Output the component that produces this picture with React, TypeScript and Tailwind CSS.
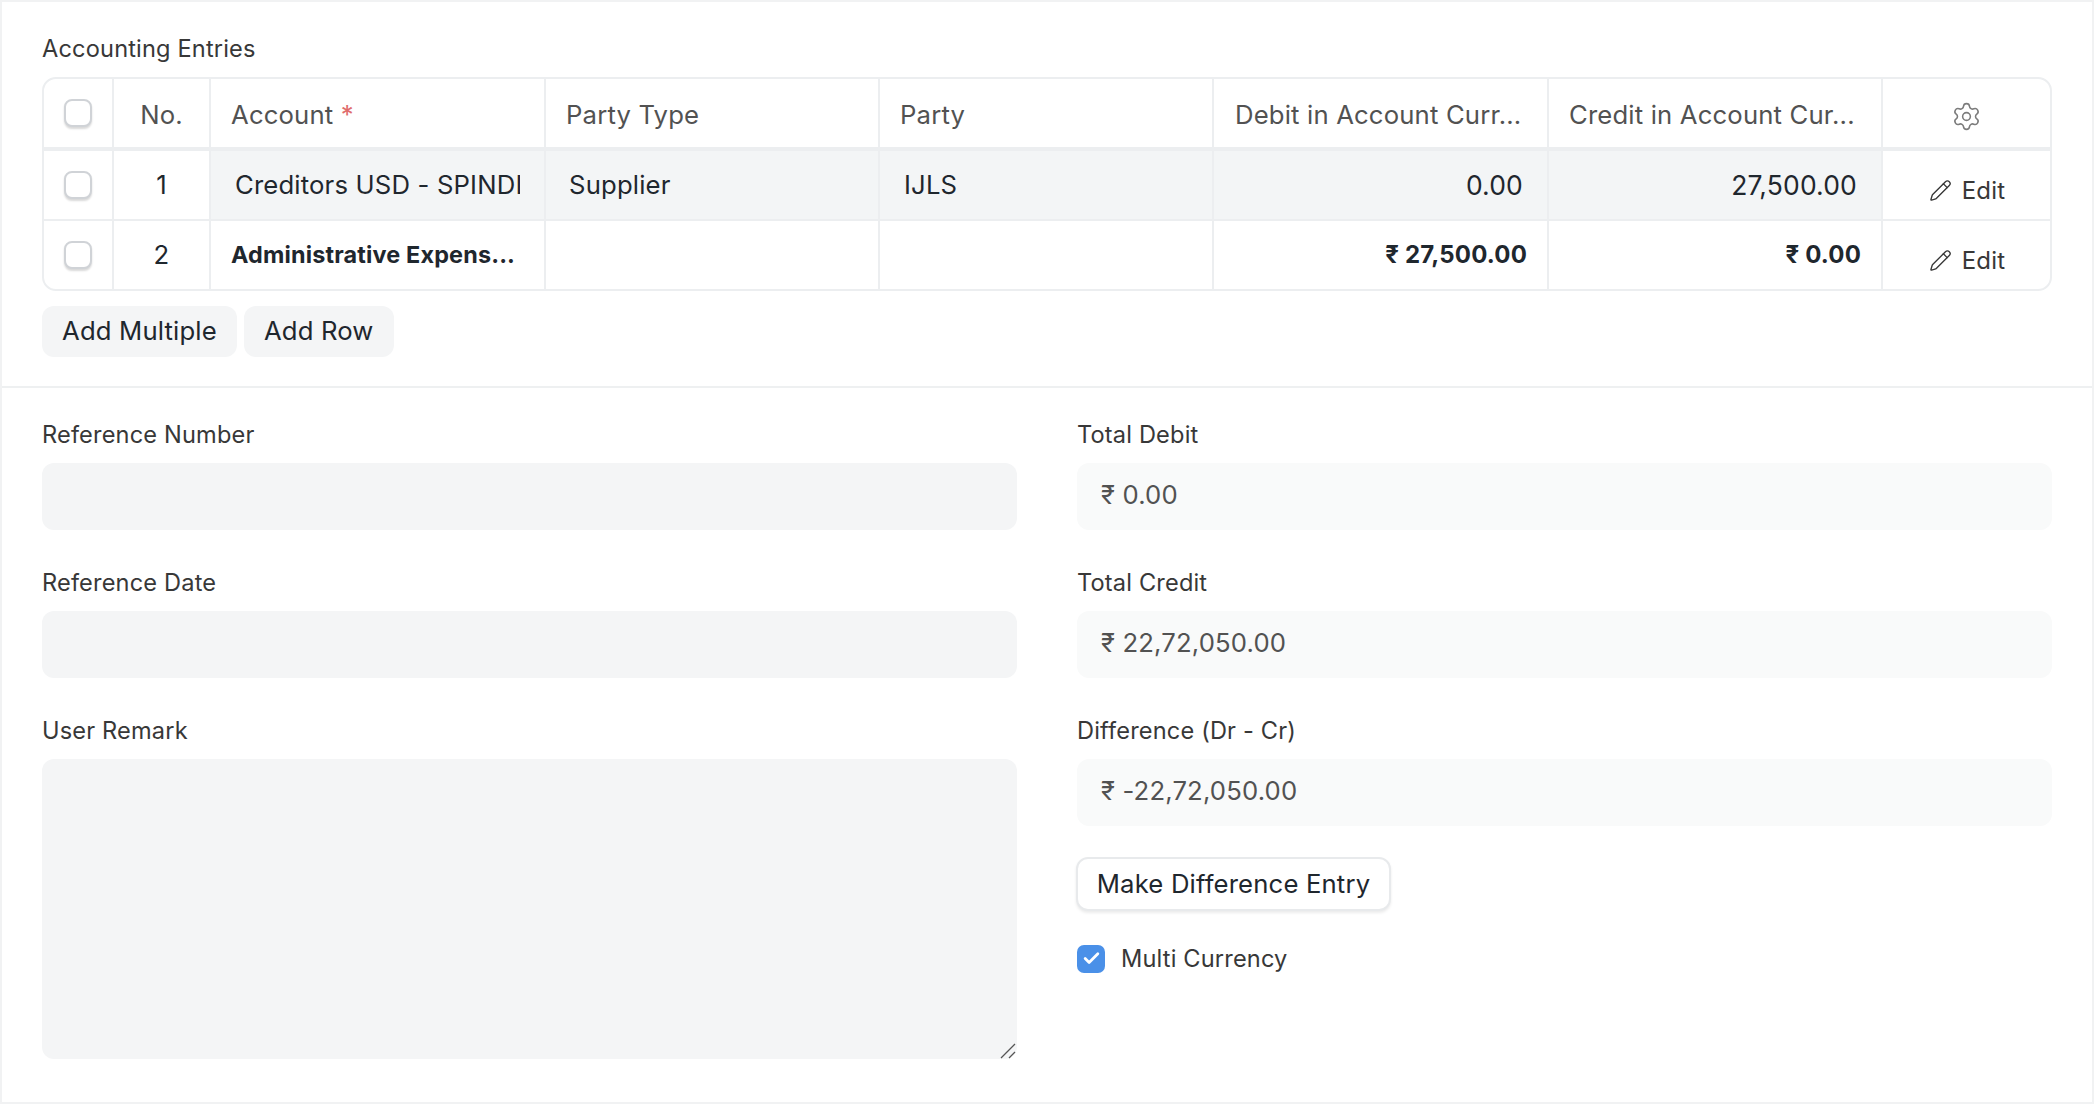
import React from "react";
import { Pencil, Settings, Check } from "lucide-react";

const font = { fontFamily: "Inter, 'Noto Sans', sans-serif" };

const cols = "grid grid-cols-[70px_97px_335px_334px_334px_335px_334px_1fr]";

const RowCheck = () => (
  <div className="w-[28px] h-[28px] rounded-[8px] border-2 border-[#d0d3d7] bg-white shadow-[0_2px_2px_rgba(0,0,0,0.15)]" />
);

const Field = ({ label, value, ro }: { label: string; value?: string; ro?: boolean }) => (
  <div className="mb-[39px]">
    <div className="h-[28px] mb-[14px] text-[23.6px] leading-[28px] text-[#383838]">{label}</div>
    <div className={`h-[67px] rounded-[12px] px-[24px] pb-[2px] flex items-center text-[25.7px] text-[#525252] ${ro ? "bg-[#f9fafa]" : "bg-[#f4f5f6]"}`}>
      {value}
    </div>
  </div>
);

const th = "border-r-2 border-[#eceef0] flex items-center overflow-hidden whitespace-nowrap";

const Row = ({ n, bold }: { n: number; bold?: boolean }) => (
  <div className={`${cols} text-[25.7px] text-[#1f272e] ${bold ? "h-[68px]" : "h-[70px] border-b-2 border-[#eceef0]"}`}>
    <div className={`${th} justify-center`}><RowCheck /></div>
    <div className={`${th} justify-center`}>{n}</div>
    {bold ? (
      <>
        <div className={`${th} px-[20px] font-bold text-[23.4px]`}>Administrative Expens...</div>
        <div className={th} />
        <div className={th} />
        <div className={`${th} justify-end pr-[20px] font-bold text-[24px]`}>₹ 27,500.00</div>
        <div className={`${th} justify-end pr-[20px] font-bold text-[24px]`}>₹ 0.00</div>
      </>
    ) : (
      <>
        <div className={`${th} bg-[#f3f5f6] pl-[24px] pr-[24px] pt-[1px]`}><span className="block w-full overflow-hidden">Creditors USD - SPINDLE</span></div>
        <div className={`${th} bg-[#f3f5f6] px-[23px] pt-[1px]`}>Supplier</div>
        <div className={`${th} bg-[#f3f5f6] px-[24px] pt-[1px]`}>IJLS</div>
        <div className={`${th} bg-[#f3f5f6] justify-end pr-[24px] pt-[1px] text-[26.5px]`}>0.00</div>
        <div className={`${th} bg-[#f3f5f6] justify-end pr-[24px] pt-[1px] text-[26.5px]`}>27,500.00</div>
      </>
    )}
    <div className="flex items-center justify-center gap-[10px] pl-[1px] pt-[11px] text-[24px] text-[#383838]">
      <Pencil size={23} strokeWidth={1.4} />
      Edit
    </div>
  </div>
);

export default function App() {
  return (
    <div style={font} className="w-[2094px] h-[1104px] bg-white border-x-2 border-y-2 border-[#f1f2f3] overflow-hidden tracking-[0.01em]">
      <div className="h-[386px] border-b-2 border-[#eef0f1] px-[40px] pt-[31px]">
        <div className="h-[32px] mb-[12px] text-[23.6px] leading-[32px] text-[#383838]">Accounting Entries</div>
        <div className="rounded-[14px] border-2 border-[#eceef0] overflow-hidden">
          <div className={`${cols} h-[72px] border-b-[4px] border-[#eceef0] text-[25.7px] text-[#525252]`}>
            <div className={`${th} justify-center`}><RowCheck /></div>
            <div className={`${th} justify-center pt-[5px]`}>No.</div>
            <div className={`${th} px-[20px] pt-[5px]`}>Account&nbsp;<span className="text-[#e06c6c]">*</span></div>
            <div className={`${th} px-[20px] pt-[5px]`}>Party Type</div>
            <div className={`${th} px-[20px] pt-[5px]`}>Party</div>
            <div className={`${th} px-[21px] pt-[5px]`}>Debit in Account Curr...</div>
            <div className={`${th} px-[20px] pt-[5px]`}>Credit in Account Cur...</div>
            <div className="flex items-center justify-center pt-[6px]"><Settings size={31} strokeWidth={1.2} className="text-[#7c7c7c]" /></div>
          </div>
          <Row n={1} />
          <Row n={2} bold />
        </div>
        <div className="flex gap-[7px] mt-[15px]">
          <button className="h-[51px] px-[20px] rounded-[12px] bg-[#f4f5f6] text-[25.7px] text-[#1f272e]">Add Multiple</button>
          <button className="h-[51px] px-[20px] rounded-[12px] bg-[#f4f5f6] text-[25.7px] text-[#1f272e]">Add Row</button>
        </div>
      </div>

      <div className="grid grid-cols-[975px_975px] gap-x-[60px] px-[40px] pt-[33px]">
        <div>
          <Field label="Reference Number" />
          <Field label="Reference Date" />
          <div className="h-[28px] mb-[14px] text-[23.6px] leading-[28px] text-[#383838]">User Remark</div>
          <div className="relative h-[300px] rounded-[12px] bg-[#f4f5f6]">
            <svg className="absolute right-0 bottom-0" width="17" height="16" viewBox="0 0 17 16" fill="none" stroke="#555" strokeWidth="1.3">
              <path d="M1 15 L15 1 M9 15 L15 9" />
            </svg>
          </div>
        </div>
        <div>
          <Field label="Total Debit" value="₹ 0.00" ro />
          <Field label="Total Credit" value="₹ 22,72,050.00" ro />
          <Field label="Difference (Dr - Cr)" value="₹ -22,72,050.00" ro />
          <button className="block -ml-[1px] -mt-[8px] h-[54px] w-[315px] rounded-[12px] border-2 border-[#e8eaec] bg-white shadow-[0_2px_3px_rgba(0,0,0,0.08)] text-[25.7px] text-[#1f272e]">Make Difference Entry</button>
          <div className="flex items-center gap-[16px] mt-[30px]">
            <div className="w-[28px] h-[28px] rounded-[7px] bg-[#4a90e8] flex items-center justify-center"><Check size={19} strokeWidth={3.5} className="text-white" /></div>
            <span className="text-[23.6px] text-[#383838]">Multi Currency</span>
          </div>
        </div>
      </div>
    </div>
  );
}
